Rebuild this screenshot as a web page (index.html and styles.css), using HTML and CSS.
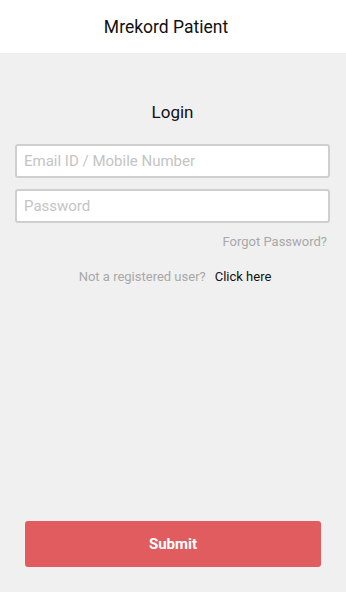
FILE: index.html
```html
<!DOCTYPE html>
<html>
<head>
<meta charset="utf-8">
<link rel="stylesheet" href="styles.css">
</head>
<body>
<div class="app">
  <header class="topbar">Mrekord Patient</header>
  <main class="content">
    <h1 class="title">Login</h1>
    <input class="field" type="text" placeholder="Email ID / Mobile Number">
    <input class="field" type="password" placeholder="Password">
    <div class="forgot">Forgot Password?</div>
    <div class="register"><span class="muted">Not a registered user?</span><span class="link">Click here</span></div>
    <div class="spacer"></div>
    <button class="submit">Submit</button>
  </main>
</div>
</body>
</html>
```
FILE: styles.css
```css
* { box-sizing: border-box; }
html, body { margin: 0; padding: 0; }
body {
  font-family: Roboto, "Noto Sans", sans-serif;
  background: #f0f0f0;
  width: 346px;
  height: 592px;
}
.app { display: flex; flex-direction: column; height: 592px; }
.topbar {
  height: 53px;
  background: #ffffff;
  display: flex;
  align-items: center;
  justify-content: center;
  padding-right: 14px;
  padding-top: 1px;
  font-size: 17.5px;
  color: #111;
}
.content {
  flex: 1;
  display: flex;
  flex-direction: column;
  padding: 0 16px 25px 15px;
}
.title {
  margin: 48px 0 21px;
  font-size: 17px;
  font-weight: 400;
  text-align: center;
  color: #111;
  line-height: 22px;
}
.field {
  height: 34px;
  width: 100%;
  border: 2px solid #cfcfcf;
  border-radius: 3px;
  background: #fff;
  padding: 0 7px;
  font-family: Roboto, sans-serif;
  font-size: 15px;
  outline: none;
  margin-bottom: 11px;
}
.field::placeholder { color: #c4c4c4; }
.forgot {
  text-align: right;
  font-size: 13px;
  color: #a8a8a8;
  margin-top: 0;
  padding-right: 3px;
  line-height: 16px;
}
.register {
  margin-top: 19px;
  padding-left: 5px;
  text-align: center;
  font-size: 13px;
  line-height: 16px;
}
.muted { color: #a8a8a8; margin-right: 9px; }
.link { color: #111; }
.spacer { flex: 1; }
.submit {
  align-self: center;
  width: 296px;
  height: 46px;
  margin-left: 1px;
  background: #e05c5e;
  border: none;
  border-radius: 3px;
  color: #fff;
  font-family: Roboto, sans-serif;
  font-weight: 700;
  font-size: 15px;
}
```
